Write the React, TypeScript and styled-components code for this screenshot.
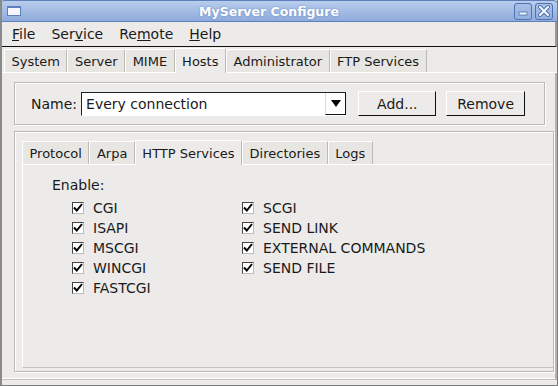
import styled, { createGlobalStyle } from "styled-components";

const Global = createGlobalStyle`
    html, body {
        margin: 0;
        padding: 0;
        background: #edebe9;
    }
    * {
        box-sizing: border-box;
    }
`

const Window = styled.div`
    width: 558px;
    height: 386px;
    display: flex;
    flex-direction: column;
    background: #edebe9;
    border: 1px solid #7a7a7a;
    border-left: 2px solid #8a8a8a;
    border-top: none;
    font-family: "DejaVu Sans", "Liberation Sans", sans-serif;
    font-size: 14px;
    color: #1a1a1a;
    overflow: hidden;
`

const TitleBar = styled.div`
    height: 22px;
    flex: none;
    display: flex;
    align-items: center;
    padding: 0 4px 0 6px;
    background: linear-gradient(#b9cdec, #8eabdc);
    border: 1px solid #5d7fbb;
    border-radius: 4px 4px 0 0;
    margin: 0 -1px 0 -2px;
`

const TitleIcon = styled.div`
    width: 14px;
    height: 10px;
    background: #f4f6fb;
    border: 1px solid #5d7fbb;
    border-top-width: 2px;
`

const TitleText = styled.div`
    flex: 1;
    text-align: center;
    color: #fff;
    font-weight: bold;
    font-size: 12.5px;
    text-shadow: 0 0 2px #5d7fbb;
    padding-left: 6px;
`

const WinButton = styled.div`
    width: 18px;
    height: 17px;
    margin-left: 3px;
    border: 1px solid #4f71ad;
    border-radius: 3px;
    background: linear-gradient(#a8c0e8, #93b0df);
    display: flex;
    align-items: center;
    justify-content: center;
`

const MenuBar = styled.div`
    height: 25px;
    flex: none;
    display: flex;
    align-items: center;
    padding-left: 2px;
    border-bottom: 1px solid #111;
    border-right: 2px solid #9a9893;
`

const MenuItem = styled.div`
    padding: 0 8px;
    u {
        text-decoration: underline;
    }
`

const TabBar = styled.div<{ $inset?: boolean }>`
    display: flex;
    align-items: flex-end;
    height: 25px;
    flex: none;
    padding-left: ${p => (p.$inset ? "0" : "2px")};
    border-bottom: 1px solid #fff;
    margin-top: ${p => (p.$inset ? "0" : "1px")};
`

const Tab = styled.div<{ $active?: boolean }>`
    height: ${p => (p.$active ? "25px" : "23px")};
    padding: 0 6.5px;
    display: flex;
    align-items: center;
    font-size: 13px;
    background: ${p => (p.$active ? "#edebe9" : "#e8e6e3")};
    border-left: 1px solid #fff;
    border-top: 1px solid #fff;
    border-right: 1px solid #bdbab4;
    margin-bottom: ${p => (p.$active ? "-1px" : "0")};
    white-space: nowrap;
`

const Panel = styled.div`
    flex: 1;
    display: flex;
    flex-direction: column;
    padding: 9px 1px 7px 12px;
    gap: 6px;
    border-right: 2px solid #b6b3ae;
    border-bottom: 1px solid #c4c1bc;
    box-shadow: inset 0 -1px 0 #fff;
    margin-bottom: 5px;
`

const GroupBox = styled.div<{ $grow?: boolean }>`
    border: 1px solid #bcb9b4;
    box-shadow: inset 1px 1px 0 #fff, 1px 1px 0 #fff;
    ${p => (p.$grow ? "flex: 1; display: flex; flex-direction: column;" : "")}
`

const NameRow = styled.div`
    display: flex;
    align-items: center;
    height: 41px;
    padding-left: 16px;
    margin-right: 9px;
`

const Label = styled.span`
    margin-right: 4px;
`

const Combo = styled.div`
    width: 273px;
    height: 24px;
    display: flex;
    background: #fff;
    border-left: 1px solid #222;
    border-top: 1px solid #222;
    border-bottom: 1px solid #fff;
    margin-right: 12px;
`

const ComboText = styled.div`
    flex: 1;
    padding-left: 4px;
    display: flex;
    align-items: center;
`

const ComboArrow = styled.div`
    width: 21px;
    display: flex;
    align-items: center;
    justify-content: center;
    border-left: 1px solid #dcdad6;
    border-right: 1px solid #111;
    border-bottom: 1px solid #111;
`

const Button = styled.div<{ $w: number }>`
    width: ${p => p.$w}px;
    height: 25px;
    margin-right: 10px;
    display: flex;
    align-items: center;
    justify-content: center;
    border-top: 1px solid #fff;
    border-left: 1px solid #fff;
    border-right: 1px solid #111;
    border-bottom: 1px solid #111;
`

const InnerTabs = styled.div`
    flex: 1;
    display: flex;
    flex-direction: column;
    padding: 8px 0 3px 7px;
`

const InnerPanel = styled.div`
    flex: 1;
    border-left: 1px solid #fff;
    border-bottom: 1px solid #c4c1bc;
    padding: 12px 0 0 29px;
`

const Enable = styled.div`
    margin-bottom: 5px;
`

const Grid = styled.div`
    display: grid;
    grid-template-columns: 170px 200px;
    grid-auto-flow: column;
    grid-template-rows: repeat(5, 20px);
    padding-left: 20px;
`

const Check = styled.div`
    display: flex;
    align-items: center;
    gap: 9px;
`

const Box = styled.span`
    width: 12px;
    height: 12px;
    background: #fff;
    border-top: 1px solid #444;
    border-left: 1px solid #444;
    border-right: 1px solid #bbb;
    border-bottom: 1px solid #bbb;
    display: flex;
    align-items: center;
    justify-content: center;
`

function CheckItem({ label }: { label: string }) {
    return (
        <Check>
            <Box>
                <svg width="10" height="10" viewBox="0 0 10 10">
                    <path d="M1 4.5 L3.8 7.5 L9 1" stroke="#000" strokeWidth="2" fill="none" />
                </svg>
            </Box>
            {label}
        </Check>
    )
}

const left = ["CGI", "ISAPI", "MSCGI", "WINCGI", "FASTCGI"]
const right = ["SCGI", "SEND LINK", "EXTERNAL COMMANDS", "SEND FILE"]

export default function App() {
    return (
        <Window>
            <Global />
            <TitleBar>
                <TitleIcon />
                <TitleText>MyServer Configure</TitleText>
                <WinButton>
                    <svg width="10" height="10" viewBox="0 0 10 10">
                        <rect x="1" y="6" width="8" height="3" fill="#f2f5fb" stroke="#4f71ad" strokeWidth="0.8" />
                    </svg>
                </WinButton>
                <WinButton>
                    <svg width="12" height="12" viewBox="0 0 12 12">
                        <path d="M2 2 L10 10 M10 2 L2 10" stroke="#4f71ad" strokeWidth="4" strokeLinecap="round" />
                        <path d="M2 2 L10 10 M10 2 L2 10" stroke="#f2f5fb" strokeWidth="2.2" strokeLinecap="round" />
                    </svg>
                </WinButton>
            </TitleBar>
            <MenuBar>
                <MenuItem><u>F</u>ile</MenuItem>
                <MenuItem>Ser<u>v</u>ice</MenuItem>
                <MenuItem>Re<u>m</u>ote</MenuItem>
                <MenuItem><u>H</u>elp</MenuItem>
            </MenuBar>
            <TabBar>
                <Tab>System</Tab>
                <Tab>Server</Tab>
                <Tab>MIME</Tab>
                <Tab $active>Hosts</Tab>
                <Tab>Administrator</Tab>
                <Tab>FTP Services</Tab>
            </TabBar>
            <Panel>
                <GroupBox style={{ marginRight: 9 }}>
                    <NameRow>
                        <Label>Name:</Label>
                        <Combo>
                            <ComboText>Every connection</ComboText>
                            <ComboArrow>
                                <svg width="10" height="7" viewBox="0 0 10 7">
                                    <path d="M0 0 H10 L5 7 Z" fill="#000" />
                                </svg>
                            </ComboArrow>
                        </Combo>
                        <Button $w={80}>Add...</Button>
                        <Button $w={81}>Remove</Button>
                    </NameRow>
                </GroupBox>
                <GroupBox $grow>
                    <InnerTabs>
                        <TabBar $inset>
                            <Tab>Protocol</Tab>
                            <Tab>Arpa</Tab>
                            <Tab $active>HTTP Services</Tab>
                            <Tab>Directories</Tab>
                            <Tab>Logs</Tab>
                        </TabBar>
                        <InnerPanel>
                            <Enable>Enable:</Enable>
                            <Grid>
                                {left.map(l => <CheckItem key={l} label={l} />)}
                                {right.map(l => <CheckItem key={l} label={l} />)}
                            </Grid>
                        </InnerPanel>
                    </InnerTabs>
                </GroupBox>
            </Panel>
        </Window>
    )
}
